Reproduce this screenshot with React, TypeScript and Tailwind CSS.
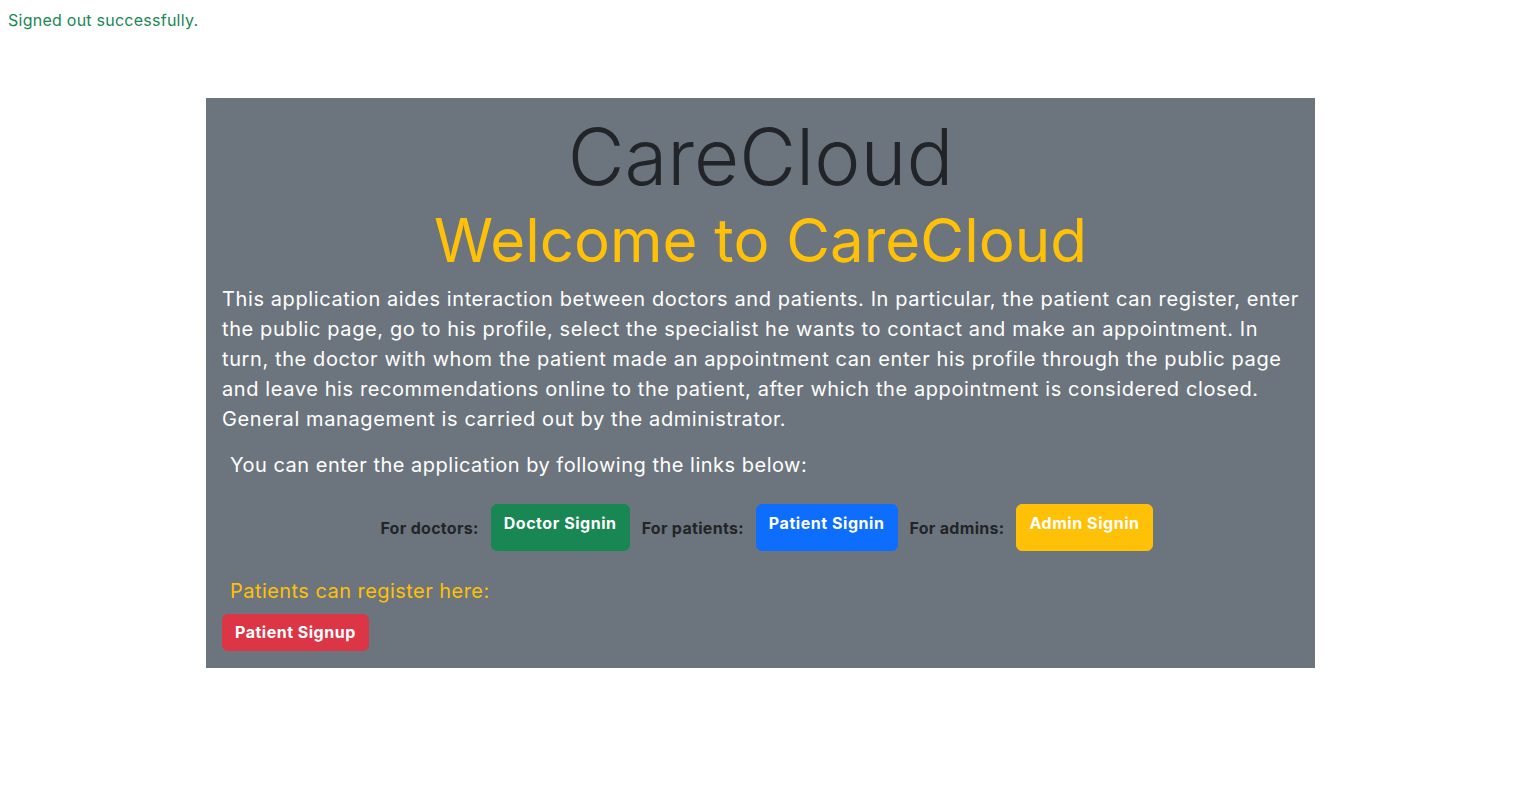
export default function App() {
  return (
    <div className="min-h-screen bg-white font-['Inter',sans-serif] text-[#212529]">
      <p className="pt-2 pl-2 text-base leading-6 tracking-[0.25px] text-[#198754]">Signed out successfully.</p>

      <div className="mx-auto mt-[66px] w-[1109px] bg-[#6c757d] px-4 pt-3 pb-[17px]">
        <h1 className="text-center text-[78px] font-light leading-[94px] text-[#212529]">CareCloud</h1>
        <h2 className="text-center text-[60px] font-normal leading-[72px] text-[#ffc107]">Welcome to CareCloud</h2>

        <p className="mt-2 text-xl leading-[30px] tracking-[0.6px] text-white">
          This application aides interaction between doctors and patients. In particular, the patient can register, enter
          <br />
          the public page, go to his profile, select the specialist he wants to contact and make an appointment. In
          <br />
          turn, the doctor with whom the patient made an appointment can enter his profile through the public page
          <br />
          and leave his recommendations online to the patient, after which the appointment is considered closed.
          <br />
          General management is carried out by the administrator.
        </p>

        <p className="mt-4 ml-2 text-xl leading-[30px] tracking-[0.5px] text-white">
          You can enter the application by following the links below:
        </p>

        <div className="mt-6 ml-3 flex items-center justify-center gap-3 text-base">
          <span className="font-bold tracking-[0.3px] text-[#212529]">For doctors:</span>
          <button className="rounded-md border border-[#198754] bg-[#198754] px-3 pt-[6px] pb-[15px] font-bold leading-6 tracking-[0.55px] text-white">
            Doctor Signin
          </button>
          <span className="font-bold tracking-[0.3px] text-[#212529]">For patients:</span>
          <button className="rounded-md border border-[#0d6efd] bg-[#0d6efd] px-3 pt-[6px] pb-[15px] font-bold leading-6 tracking-[0.55px] text-white">
            Patient Signin
          </button>
          <span className="font-bold tracking-[0.3px] text-[#212529]">For admins:</span>
          <button className="rounded-md border border-[#ffc107] bg-[#ffc107] px-3 pt-[6px] pb-[15px] font-bold leading-6 tracking-[0.55px] text-white">
            Admin Signin
          </button>
        </div>

        <p className="mt-[25px] ml-2 text-xl leading-[30px] tracking-[0.45px] text-[#ffc107]">Patients can register here:</p>

        <button className="mt-2 rounded-md border border-[#dc3545] bg-[#dc3545] px-3 py-[6px] text-base font-bold leading-[23px] tracking-[0.5px] text-white">
          Patient Signup
        </button>
      </div>
    </div>
  )
}
